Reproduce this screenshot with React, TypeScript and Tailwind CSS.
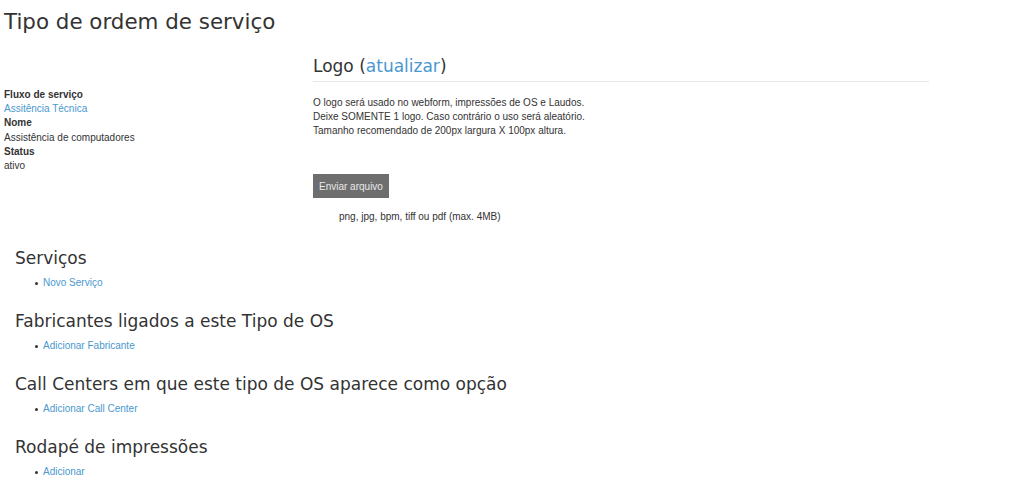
const sections = [
  { title: 'Serviços', link: 'Novo Serviço' },
  { title: 'Fabricantes ligados a este Tipo de OS', link: 'Adicionar Fabricante' },
  { title: 'Call Centers em que este tipo de OS aparece como opção', link: 'Adicionar Call Center' },
  { title: 'Rodapé de impressões', link: 'Adicionar' },
];

const heading = "font-['DejaVu_Sans',sans-serif] text-[#333]";
const link = 'text-[#4a98cf] hover:underline cursor-pointer';

export default function App() {
  return (
    <div className="min-h-screen bg-white font-['Liberation_Sans',Arial,sans-serif] text-[10px] text-[#333]">
      <h1 className={`${heading} mt-[10px] pl-[4px] text-[21.4px] leading-[24px]`}>Tipo de ordem de serviço</h1>

      <div className="mt-[20px] flex">
        {/* dados do tipo */}
        <dl className="w-[313px] pl-[4px] pt-[34px] leading-[14.2px]">
          <dt className="font-bold">Fluxo de serviço</dt>
          <dd className={link}>Assitência Técnica</dd>
          <dt className="font-bold">Nome</dt>
          <dd>Assistência de computadores</dd>
          <dt className="font-bold">Status</dt>
          <dd>ativo</dd>
        </dl>

        {/* logo */}
        <div className="w-[616px]">
          <h2 className={`${heading} border-b border-[#e6e6e6] pb-[3px] text-[17px] leading-[24px]`}>
            Logo (<span className={link}>atualizar</span>)
          </h2>
          <p className="mt-[14px] leading-[14px]">
            O logo será usado no webform, impressões de OS e Laudos.
            <br />
            Deixe SOMENTE 1 logo. Caso contrário o uso será aleatório.
            <br />
            Tamanho recomendado de 200px largura X 100px altura.
          </p>
          <button className="mt-[36px] block h-[24px] bg-[#6e6e6e] px-[6px] text-[10px] text-[#e8e8e8]">
            Enviar arquivo
          </button>
          <div className="mt-[12px] pl-[26px] leading-[14px]">png, jpg, bpm, tiff ou pdf (max. 4MB)</div>
        </div>
      </div>

      <div className="mt-[22px] flex flex-col gap-[19px] pl-[15px]">
        {sections.map((s) => (
          <div key={s.title}>
            <h3 className={`${heading} text-[17px] leading-[24px]`}>{s.title}</h3>
            <ul className="mt-[6px] leading-[14px]">
              <li className="ml-[20px] flex items-center">
                <span className="mr-[5px] mt-[1px] inline-block h-[3px] w-[3px] rounded-full bg-[#333]" />
                <span className={link}>{s.link}</span>
              </li>
            </ul>
          </div>
        ))}
      </div>
    </div>
  );
}
